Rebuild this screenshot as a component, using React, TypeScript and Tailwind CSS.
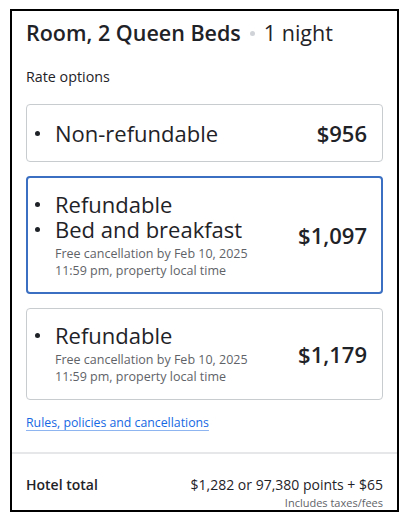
import React from "react";

function Dot() {
  return <span className="inline-block w-[5px] h-[5px] rounded-full bg-[#1f2328] mr-[15px] shrink-0" />;
}

function BigLine({ children }: { children: React.ReactNode }) {
  return (
    <div className="flex items-center text-[22px] leading-[25px] text-[#1f2328]">
      <Dot />
      <span>{children}</span>
    </div>
  );
}

function Small({ children }: { children: React.ReactNode }) {
  return <div className="text-[12.5px] leading-[17px] text-[#5f6368]">{children}</div>;
}

export default function App() {
  return (
    <div className="w-[411px] h-[526px] bg-white font-['Open_Sans',sans-serif] pt-[9px] pl-[10px]">
      <div className="w-[389px] h-[503px] border-2 border-black overflow-hidden flex flex-col">
        <div className="px-[14px]">
          <div className="pt-[8px] text-[21.5px] leading-[28px] text-[#1f2328] flex items-center">
            <span className="font-semibold">Room, 2 Queen Beds</span>
            <span className="mx-[9px] inline-block w-[5px] h-[5px] rounded-full bg-[#d0d3d7]" />
            <span>1 night</span>
          </div>
          <div className="mt-[20px] text-[14.3px] leading-[20px] text-[#1f2328]">Rate options</div>

          <div className="mt-[17px] flex flex-col gap-[14px]">
            <div className="border border-[#c9cccf] rounded-[4px] py-[15px] pl-[8px] pr-[15px] flex items-center justify-between">
              <div className="flex items-center text-[22px] leading-[26px] text-[#1f2328]">
                <Dot />
                <span>Non-refundable</span>
              </div>
              <div className="text-[22px] leading-[26px] font-semibold text-[#1f2328]">$956</div>
            </div>

            <div className="border-2 border-[#3a6fc2] rounded-[4px] py-[13.5px] pl-[7px] pr-[14px] flex items-center justify-between">
              <div>
                <BigLine>Refundable</BigLine>
                <BigLine>Bed and breakfast</BigLine>
                <div className="pl-[20px] mt-[3px]">
                  <Small>Free cancellation by Feb 10, 2025</Small>
                  <Small>11:59 pm, property local time</Small>
                </div>
              </div>
              <div className="text-[22px] leading-[26px] font-semibold text-[#1f2328]">$1,097</div>
            </div>

            <div className="border border-[#c9cccf] rounded-[4px] py-[14px] pl-[8px] pr-[15px] flex items-center justify-between">
              <div>
                <BigLine>Refundable</BigLine>
                <div className="pl-[20px] mt-[3px]">
                  <Small>Free cancellation by Feb 10, 2025</Small>
                  <Small>11:59 pm, property local time</Small>
                </div>
              </div>
              <div className="text-[22px] leading-[26px] font-semibold text-[#1f2328]">$1,179</div>
            </div>
          </div>

          <div className="mt-[13px] text-[12.3px] leading-[20px]">
            <a href="#" className="text-[#1668e3] underline decoration-[#8fb5f0] underline-offset-[3px]">
              Rules, policies and cancellations
            </a>
          </div>
        </div>

        <div className="mt-[19px] h-[2px] bg-[#e6e7e8]" />

        <div className="px-[14px] pt-[21px]">
          <div className="flex items-center justify-between text-[14px] leading-[20px] text-[#1f2328]">
            <span className="font-semibold">Hotel total</span>
            <span>$1,282 or 97,380 points + $65</span>
          </div>
          <div className="text-right text-[11px] leading-[14px] text-[#5f6368] mt-[1px]">Includes taxes/fees</div>
        </div>
      </div>
    </div>
  );
}
